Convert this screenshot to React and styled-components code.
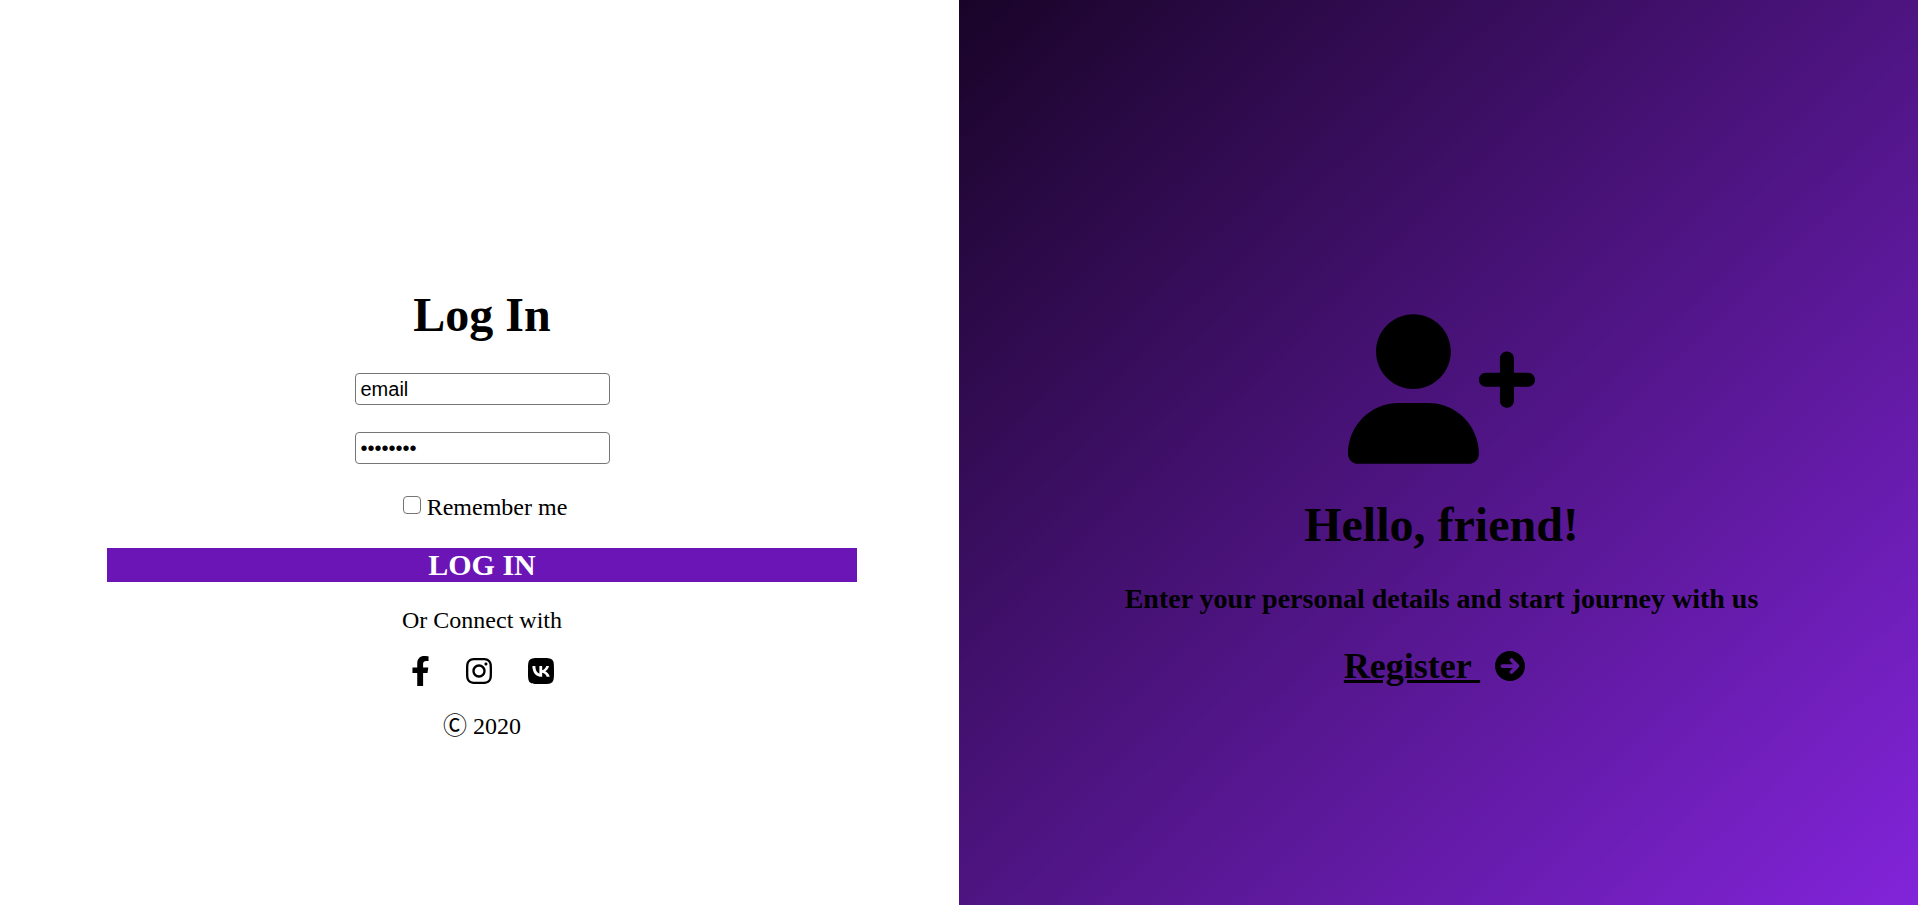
import React from "react";
import styled, { createGlobalStyle } from "styled-components";
import { FaFacebookF, FaInstagram } from "react-icons/fa";
import { FaVk } from "react-icons/fa6";

const GlobalStyle = createGlobalStyle`
  body {
    margin: 0;
    color: #000;
    background: #fff;
    font: 24px/28px "Liberation Serif", "Noto Sans CJK JP", serif;
  }
`;

const Page = styled.main`
  display: grid;
  grid-template-columns: 1fr 1fr;
  min-height: 100vh;
`;

const Panel = styled.section`
  display: flex;
  flex-direction: column;
  align-items: center;
  justify-content: center;
  box-sizing: border-box;
  padding: 122px 0 0 5px;
  text-align: center;
`;

const WelcomePanel = styled(Panel)`
  padding: 95px 0 0 6px;
  background: linear-gradient(to bottom right, #190428, #8224da);
`;

const Form = styled.form`
  display: flex;
  flex-direction: column;
  align-items: center;
  width: 750px;
  max-width: 100%;
`;

const Title = styled.h1`
  margin: 0 0 31px;
  font-size: 48px;
  line-height: 55px;
`;

const Subtitle = styled.h2`
  margin: 0 0 30px;
  font-size: 28px;
  line-height: 32px;
`;

const TextField = styled.input`
  box-sizing: border-box;
  width: 255px;
  height: 32px;
  margin-bottom: 27px;
  padding: 1px 5px;
  border: 1px solid #767676;
  border-radius: 4px;
  background: #fff;
  color: #000;
  font: 20px "Liberation Sans", Arial, sans-serif;
`;

const Remember = styled.label`
  display: flex;
  align-items: center;
  gap: 6px;
  margin: 2px 0 27px;
  padding-left: 6px;
`;

const Checkbox = styled.input`
  appearance: none;
  box-sizing: border-box;
  width: 18px;
  height: 18px;
  margin: 0 0 4px;
  border: 1px solid #767676;
  border-radius: 4px;
  background: #fff;
  &:checked {
    background: #6b15b6;
  }
`;

const SubmitButton = styled.button`
  width: 100%;
  height: 34px;
  margin-bottom: 24px;
  padding: 0;
  border: 0;
  background: #6b15b6;
  color: #fff;
  font: bold 30px/34px "Liberation Serif", serif;
`;

const Text = styled.p`
  margin: 0;
`;

const SocialLinks = styled.nav`
  display: flex;
  gap: 36px;
  margin: 22px 0 26px;
`;

const SocialLink = styled.a`
  display: flex;
  color: #000;

  svg {
    width: ${({ $narrow }) => ($narrow ? "19px" : "26px")};
    height: 30px;
  }
`;

const UserPlus = styled.svg`
  width: 187px;
  height: 150px;
  margin-bottom: 33px;
`;

const RegisterRow = styled.div`
  display: flex;
  align-items: center;
  gap: 15px;
  padding-right: 14px;
  font-size: 36px;
  font-weight: bold;
  line-height: 42px;
`;

const RegisterLink = styled.a`
  color: #000;
  white-space: pre;
`;

const ArrowCircle = styled.svg`
  width: 30px;
  height: 30px;
`;

export default function App() {
  return (
    <>
      <GlobalStyle />
      <Page>
        <Panel>
          <Form onSubmit={(event) => event.preventDefault()}>
            <Title>Log In</Title>
            <TextField type="text" aria-label="Email" defaultValue="email" />
            <TextField type="password" aria-label="Password" defaultValue="password" />
            <Remember>
              <Checkbox type="checkbox" />
              Remember me
            </Remember>
            <SubmitButton type="submit">LOG IN</SubmitButton>
          </Form>
          <Text>Or Connect with</Text>
          <SocialLinks>
            <SocialLink $narrow href="#facebook" aria-label="Facebook">
              <FaFacebookF />
            </SocialLink>
            <SocialLink href="#instagram" aria-label="Instagram">
              <FaInstagram />
            </SocialLink>
            <SocialLink href="#vk" aria-label="VK">
              <FaVk />
            </SocialLink>
          </SocialLinks>
          <Text>Ⓒ 2020</Text>
        </Panel>
        <WelcomePanel>
          <UserPlus viewBox="0 0 640 512" aria-hidden="true">
            <path d="M224 256c70.7 0 128-57.31 128-128S294.7 0 224 0C153.3 0 96 57.31 96 128S153.3 256 224 256zM274.7 304H173.3C77.61 304 0 381.6 0 477.3C0 496.5 15.52 512 34.66 512h378.7C432.5 512 448 496.5 448 477.3C448 381.6 370.4 304 274.7 304zM616 200h-48v-48C568 138.8 557.3 128 544 128s-24 10.75-24 24v48h-48C458.8 200 448 210.8 448 224s10.75 24 24 24h48v48C520 309.3 530.8 320 544 320s24-10.75 24-24v-48h48C629.3 248 640 237.3 640 224S629.3 200 616 200z" />
          </UserPlus>
          <Title>Hello, friend!</Title>
          <Subtitle>Enter your personal details and start journey with us</Subtitle>
          <RegisterRow>
            <RegisterLink href="#register">Register </RegisterLink>
            <ArrowCircle viewBox="0 0 512 512" aria-hidden="true">
              <path
                fillRule="evenodd"
                d="M256 0C114.6 0 0 114.6 0 256s114.6 256 256 256s256-114.6 256-256S397.4 0 256 0zM406.6 278.6l-103.1 103.1c-12.5 12.5-32.75 12.5-45.25 0s-12.5-32.75 0-45.25L306.8 288H128C110.3 288 96 273.7 96 256s14.31-32 32-32h178.8l-48.55-48.4c-12.5-12.5-12.5-32.75 0-45.25s32.75-12.5 45.25 0l103.1 103C419.1 245.9 419.1 266.1 406.6 278.6z"
              />
            </ArrowCircle>
          </RegisterRow>
        </WelcomePanel>
      </Page>
    </>
  );
}
